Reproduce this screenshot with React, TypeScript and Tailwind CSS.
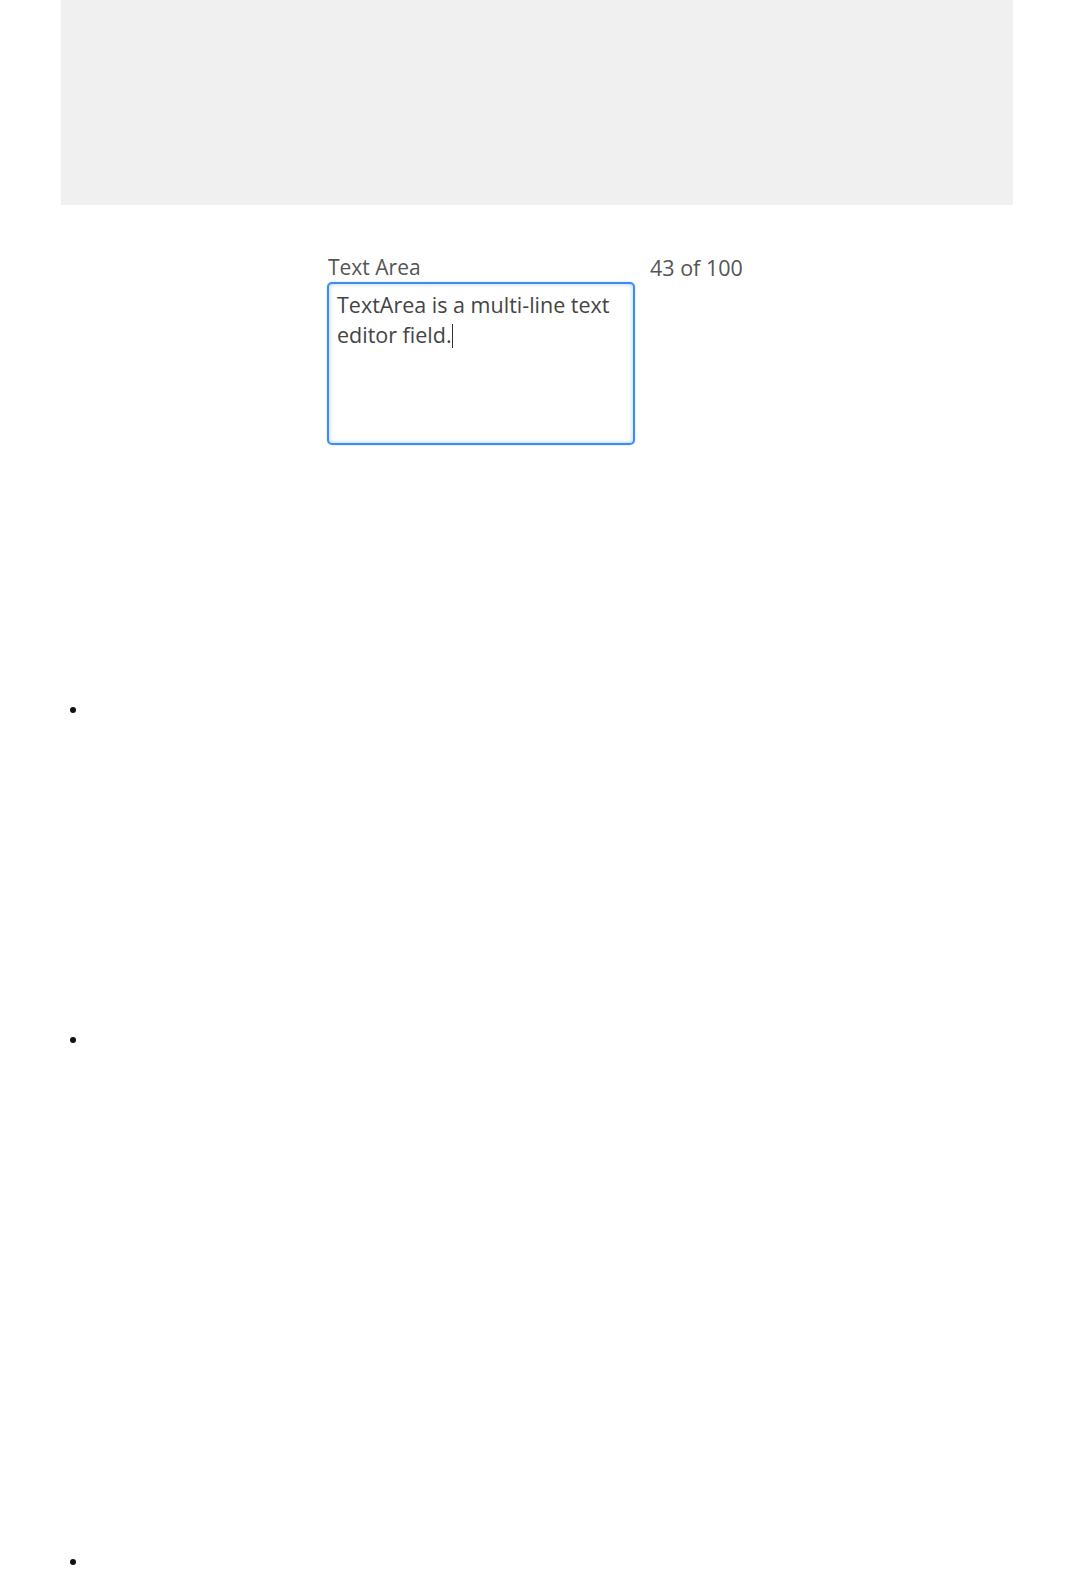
import React from 'react';

export default function App(): JSX.Element {
  return (
    <div className="min-h-[1570px] bg-white font-['Open_Sans',sans-serif]">
      <div className="ml-[61px] h-[205px] w-[952px] bg-[#f0f0f0]" />

      <div className="mt-[50px] flex items-start pl-[327px]">
        <div className="flex flex-col">
          <label htmlFor="ta" className="h-[27px] pl-px text-[21px] leading-[25px] text-[#555]">
            Text Area
          </label>
          <div
            id="ta"
            role="textbox"
            aria-multiline="true"
            className="h-[163px] w-[308px] rounded-[5px] border-2 border-[#3d8eec] px-[8px] py-[6px] text-[21.5px] leading-[29px] text-[#444] shadow-[inset_0_0_4px_rgba(61,142,236,0.45),0_0_2px_rgba(61,142,236,0.45)]"
          >
            TextArea is a multi-line text editor field.
            <span className="inline-block h-[24px] w-px translate-y-[5px] bg-[#333]" />
          </div>
        </div>
        <span className="ml-[15px] h-[25px] text-[21.5px] leading-[25px] text-[#555]">43 of 100</span>
      </div>

      <ul className="mt-[252px] list-disc pl-[88px] text-[16px] text-[#111]">
        <li className="h-[330px]" />
        <li className="h-[522px]" />
        <li className="h-[28px]" />
      </ul>
    </div>
  );
}
